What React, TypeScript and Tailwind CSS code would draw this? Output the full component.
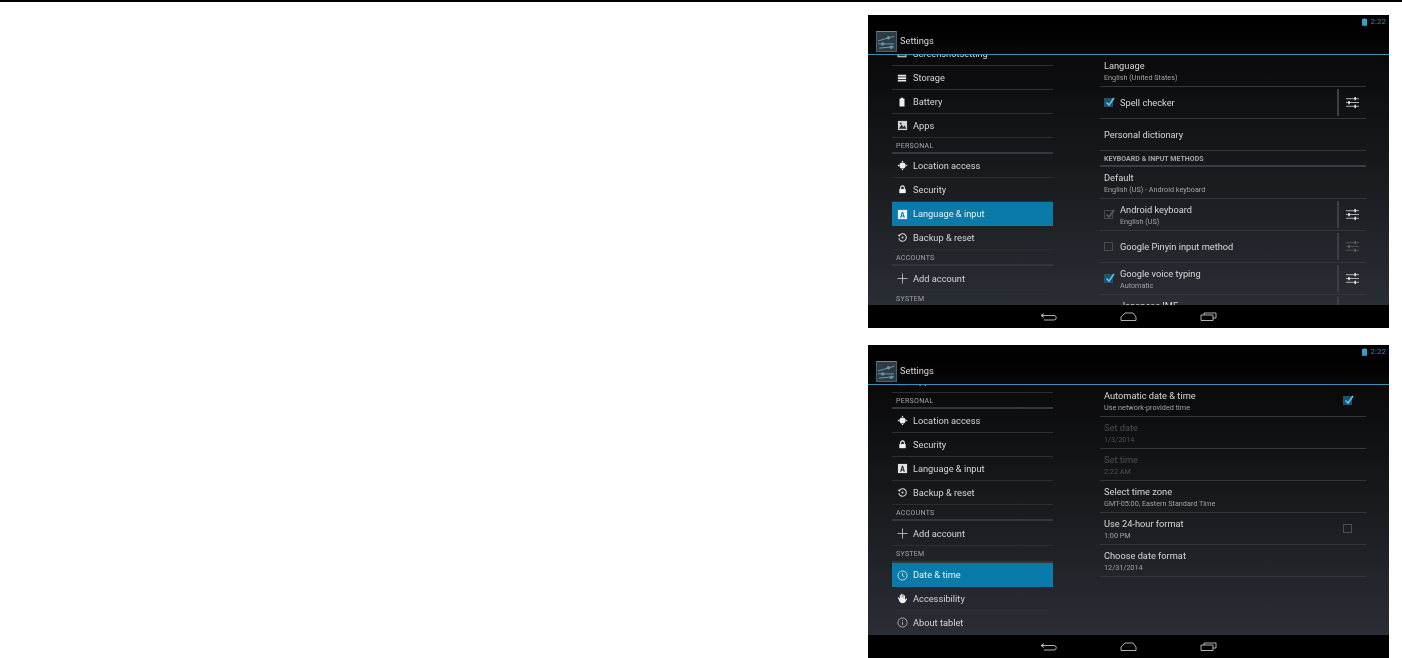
import type { ReactNode } from "react";

const Svg = ({ children, className = "h-[10px] w-[10px]" }: { children: ReactNode; className?: string }) => (
  <svg viewBox="0 0 12 12" className={`shrink-0 ${className}`} aria-hidden>
    {children}
  </svg>
);

// holo system icons, drawn small
const icons: Record<string, ReactNode> = {
  screen: (
    <Svg>
      <rect x="0.5" y="2" width="11" height="8" fill="#bdbdbd" />
      <rect x="2" y="3.5" width="8" height="5" fill="#3a3d40" />
    </Svg>
  ),
  storage: (
    <Svg>
      <path d="M1 2h10v2.2H1zM1 5h10v2.2H1zM1 8h10v2.2H1z" fill="#e8e8e8" />
    </Svg>
  ),
  battery: (
    <Svg>
      <path d="M4.5 1h3v1H9v9.5H3V2h1.5z" fill="#f0f0f0" />
    </Svg>
  ),
  apps: (
    <Svg className="h-[11px] w-[11px]">
      <rect x="1" y="1" width="10" height="10" fill="#d4d4d4" />
      <path d="M2 9.5 5 5l2 2.5L8.5 6 10 9.5z" fill="#2a2a2a" />
      <circle cx="4" cy="3.8" r="1" fill="#2a2a2a" />
    </Svg>
  ),
  location: (
    <Svg className="h-[11px] w-[11px]">
      <path d="M6 0.5 7 2.3h-2zM6 11.5 5 9.7h2zM0.5 6 2.3 5v2zM11.5 6 9.7 7V5z" fill="#e8e8e8" />
      <circle cx="6" cy="6" r="3.4" fill="#eeeeee" />
    </Svg>
  ),
  lock: (
    <Svg className="h-[11px] w-[11px]">
      <path d="M2.5 5.5h7V10h-7z" fill="#f2f2f2" />
      <path d="M4 5.5V4a2 2 0 0 1 4 0v1.5" fill="none" stroke="#f2f2f2" strokeWidth="1.2" />
    </Svg>
  ),
  language: (
    <Svg className="h-[11px] w-[11px]">
      <rect x="1" y="1" width="10" height="10" fill="#e4e4e4" />
      <path d="M3.4 9.5 5.4 3h1.2l2 6.5H7.3L7 8.3H5l-.3 1.2zM5.3 7.2h1.4L6 4.8z" fill="#1f2226" />
    </Svg>
  ),
  languageOn: (
    <Svg className="h-[11px] w-[11px]">
      <rect x="1" y="1" width="10" height="10" fill="#f0f6fa" />
      <path d="M3.4 9.5 5.4 3h1.2l2 6.5H7.3L7 8.3H5l-.3 1.2zM5.3 7.2h1.4L6 4.8z" fill="#0a7fae" />
    </Svg>
  ),
  backup: (
    <Svg className="h-[11px] w-[11px]">
      <path d="M2.4 4.2A4.1 4.1 0 1 1 2 6.5" fill="none" stroke="#dcdcdc" strokeWidth="1.1" />
      <path d="M0.6 3.4 3.6 2.6 3.2 5.4z" fill="#dcdcdc" />
      <circle cx="6" cy="6" r="1.1" fill="#dcdcdc" />
    </Svg>
  ),
  add: (
    <Svg className="h-[11px] w-[11px]">
      <path d="M6 0.5v11M0.5 6h11" stroke="#c8c8c8" strokeWidth="0.9" />
    </Svg>
  ),
  clock: (
    <Svg className="h-[11px] w-[11px]">
      <circle cx="6" cy="6" r="5" fill="none" stroke="#dbeaf2" strokeWidth="0.9" />
      <path d="M6 3v3.2l2 1.2" fill="none" stroke="#dbeaf2" strokeWidth="0.9" />
    </Svg>
  ),
  hand: (
    <Svg className="h-[11px] w-[11px]">
      <path
        d="M3 6V2.6a.6.6 0 0 1 1.2 0V5h.3V1.5a.6.6 0 0 1 1.2 0V5H6V1.9a.6.6 0 0 1 1.2 0V5.2h.3V3a.6.6 0 0 1 1.2 0v4.4c1-.8 1.7-1.5 2.2-1.2.4.3-.6 1.7-1.5 3-.7 1.1-1.6 1.9-3.2 1.9-2 0-3.4-1.2-3.9-3L1 5.4c-.2-.7.8-1 1.1-.3z"
        fill="#efefef"
      />
    </Svg>
  ),
  info: (
    <Svg className="h-[11px] w-[11px]">
      <circle cx="6" cy="6" r="5" fill="none" stroke="#c4c4c4" strokeWidth="0.9" />
      <path d="M6 5.2v3.6M6 3.2v1" stroke="#c4c4c4" strokeWidth="0.9" />
    </Svg>
  ),
};

type NavEntry =
  | { header: string; tall?: boolean }
  | { id: string; label: string; icon: string; tall?: boolean };

const sideNav: NavEntry[] = [
  { id: "screen", label: "Screenshotsetting", icon: "screen" },
  { id: "storage", label: "Storage", icon: "storage" },
  { id: "battery", label: "Battery", icon: "battery" },
  { id: "apps", label: "Apps", icon: "apps" },
  { header: "PERSONAL" },
  { id: "location", label: "Location access", icon: "location" },
  { id: "security", label: "Security", icon: "lock" },
  { id: "language", label: "Language & input", icon: "language" },
  { id: "backup", label: "Backup & reset", icon: "backup" },
  { header: "ACCOUNTS" },
  { id: "add", label: "Add account", icon: "add", tall: true },
  { header: "SYSTEM", tall: true },
  { id: "date", label: "Date & time", icon: "clock" },
  { id: "access", label: "Accessibility", icon: "hand" },
  { id: "about", label: "About tablet", icon: "info" },
];

function SettingsGlyph() {
  return (
    <div className="flex h-[21px] w-[21px] shrink-0 items-center justify-center rounded-[1px] border border-[#3d6478] border-t-[#4f93b3] bg-[#2f3b42]">
      <svg viewBox="0 0 20 20" className="h-[19px] w-[19px]" aria-hidden>
        <path d="M1 9.5 18 4.5M1 12.5h17M2 17l16-1.5" stroke="#8fb0bf" strokeWidth="0.8" fill="none" />
        <circle cx="12" cy="6" r="1.8" fill="#4f9cc4" />
        <circle cx="6" cy="12.5" r="1.8" fill="#4f9cc4" />
        <circle cx="15" cy="16" r="1.8" fill="#4f9cc4" />
      </svg>
    </div>
  );
}

function TuneIcon({ dim = false }: { dim?: boolean }) {
  return (
    <svg viewBox="0 0 12 12" className={dim ? "h-[13px] w-[13px] opacity-30" : "h-[13px] w-[13px]"} aria-hidden>
      <path d="M0 2.5h12M0 6h12M0 9.5h12" stroke="#c8c8c8" strokeWidth="0.8" />
      <path d="M8.5 1v3M2.8 4.5v3M8.5 8v3" stroke="#e8e8e8" strokeWidth="1.4" />
    </svg>
  );
}

function Check({ on = false, dim = false }: { on?: boolean; dim?: boolean }) {
  const box = dim ? "border-[#44484b]" : on ? "border-[#23526b] bg-[#1a5472]" : "border-[#4a4d50]";
  return (
    <span className={`relative block h-[9px] w-[9px] shrink-0 border ${box}`}>
      {on && (
        <svg viewBox="0 0 10 10" className="absolute -top-[2px] left-0 h-[10px] w-[10px]" aria-hidden>
          <path d="M1.5 5.5 4 8l5-7" fill="none" stroke={dim ? "#5a5e61" : "#5cc4ee"} strokeWidth="1.6" />
        </svg>
      )}
    </span>
  );
}

function SideList({ selected, offset }: { selected: string; offset: string }) {
  return (
    <div className="w-[185px] shrink-0 overflow-hidden pl-6">
      <div className={offset}>
        {sideNav.map((entry) => {
          if ("header" in entry) {
            return (
              <div
                key={entry.header}
                className={`flex items-center border-b-2 border-[#34373b] pl-1 pt-[2px] text-[7px] leading-none tracking-[0.3px] text-[#a3a5a7] ${entry.tall ? "h-[17px]" : "h-4"}`}
              >
                {entry.header}
              </div>
            );
          }
          const isOn = entry.id === selected;
          const icon = isOn && entry.id === "language" ? "languageOn" : entry.icon;
          return (
            <div
              key={entry.id}
              className={`box-border flex items-center pl-[5px] text-[9.25px] leading-none ${entry.tall ? "h-[25px] pt-[1px]" : "h-6"} ${isOn ? "bg-[#0a7ba8] text-[#e6f0f5]" : "border-b border-[#2b2e32] text-[#d6d6d6]"}`}
            >
              <span className="flex w-[10px] items-center justify-center">{icons[icon]}</span>
              <span className="ml-[6px]">{entry.label}</span>
            </div>
          );
        })}
      </div>
    </div>
  );
}

type Pref = {
  title: string;
  sub?: string;
  check?: "on" | "off" | "dim";
  tune?: "on" | "dim";
  end?: "on" | "off";
  muted?: boolean;
};

function PrefRow({ p }: { p: Pref }) {
  return (
    <div className="box-border flex h-8 shrink-0 items-center border-b border-[#33363a] pl-1">
      {p.check && (
        <span className="mr-[7px]">
          <Check on={p.check !== "off"} dim={p.check === "dim"} />
        </span>
      )}
      <div className="min-w-0 flex-1">
        <div className={`text-[9.25px] leading-[11px] ${p.muted ? "text-[#4c4f52]" : "text-[#d8d8d8]"}`}>{p.title}</div>
        {p.sub && <div className={`mt-[2px] text-[7.25px] leading-[9px] ${p.muted ? "text-[#4c4f52]" : "text-[#a0a2a4]"}`}>{p.sub}</div>}
      </div>
      {p.tune && (
        <div className="flex h-[27px] w-[29px] items-center justify-center border-l-2 border-[#3c3f43]">
          <TuneIcon dim={p.tune === "dim"} />
        </div>
      )}
      {p.end && (
        <span className="mr-[14px]">
          <Check on={p.end === "on"} />
        </span>
      )}
    </div>
  );
}

function Screen({ children }: { children: ReactNode }) {
  return (
    <div className="flex h-[313px] w-[521px] flex-col overflow-hidden bg-black blur-[0.3px]">
      <div className="box-content h-[39px] shrink-0 border-b border-[#3a8fb7] bg-gradient-to-b from-black to-[#0a0a0a]">
        <div className="flex h-[13px] items-center justify-end gap-[4px] pr-[3px] pt-[1px]">
          <svg viewBox="0 0 6 9" className="h-[8px] w-[5px]" aria-hidden>
            <path d="M2 0h2v1h2v8H0V1h2z" fill="#33a0cc" />
          </svg>
          <span className="text-[8px] leading-none text-[#2f88ad]">2:22</span>
        </div>
        <div className="flex h-[26px] items-center gap-[3px] pl-2">
          <SettingsGlyph />
          <span className="text-[9.25px] text-[#d8d8d8]">Settings</span>
        </div>
      </div>
      <div className="flex min-h-0 flex-1 overflow-hidden bg-gradient-to-b from-[#0a0a0b] to-[#2a2e35]">{children}</div>
      <div className="flex h-[23px] shrink-0 items-center justify-center bg-black">
        <div className="flex w-[80px] justify-center">
          <svg viewBox="0 0 17 9" className="h-[9px] w-[17px]" aria-hidden>
            <path d="M4 1.5 1 3.5 4 5.5M1 3.5h13a2 2 0 0 1 0 4.5H4" fill="none" stroke="#c4c4c4" strokeWidth="0.9" />
          </svg>
        </div>
        <div className="flex w-[80px] justify-center">
          <svg viewBox="0 0 17 9" className="h-[9px] w-[17px]" aria-hidden>
            <path d="M1 8.5V5L5 1h8l3 4v3.5z" fill="none" stroke="#c4c4c4" strokeWidth="0.9" />
          </svg>
        </div>
        <div className="flex w-[80px] justify-center">
          <svg viewBox="0 0 17 9" className="h-[9px] w-[17px]" aria-hidden>
            <path d="M1 3h12v5.5H1zM4 3V1h12v5h-3" fill="none" stroke="#c4c4c4" strokeWidth="0.9" />
          </svg>
        </div>
      </div>
    </div>
  );
}

const inputPrefs: Pref[] = [
  { title: "Language", sub: "English (United States)" },
  { title: "Spell checker", check: "on", tune: "on" },
  { title: "Personal dictionary" },
];

const keyboardPrefs: Pref[] = [
  { title: "Default", sub: "English (US) - Android keyboard" },
  { title: "Android keyboard", sub: "English (US)", check: "dim", tune: "on" },
  { title: "Google Pinyin input method", check: "off", tune: "dim" },
  { title: "Google voice typing", sub: "Automatic", check: "on", tune: "on" },
  { title: "Japanese IME", sub: "Japanese", check: "off", tune: "on" },
];

const datePrefs: Pref[] = [
  { title: "Automatic date & time", sub: "Use network-provided time", end: "on" },
  { title: "Set date", sub: "1/3/2014", muted: true },
  { title: "Set time", sub: "2:22 AM", muted: true },
  { title: "Select time zone", sub: "GMT-05:00, Eastern Standard Time" },
  { title: "Use 24-hour format", sub: "1:00 PM", end: "off" },
  { title: "Choose date format", sub: "12/31/2014" },
];

export default function App() {
  return (
    <div className="h-[658px] w-[1402px] overflow-hidden bg-white font-['Roboto',sans-serif]">
      <div className="h-[2px] bg-black" />
      <div className="ml-[868px] flex flex-col gap-[17px] pt-[13px]">
        <Screen>
          <SideList selected="language" offset="-mt-[13px]" />
          <div className="ml-[47px] w-[266px]">
            {inputPrefs.map((p) => (
              <PrefRow key={p.title} p={p} />
            ))}
            <div className="flex h-4 items-center border-b-2 border-[#3a3d41] pl-1 pt-[2px] text-[7px] font-bold leading-none tracking-[0.03px] text-[#a3a5a7]">
              KEYBOARD &amp; INPUT METHODS
            </div>
            {keyboardPrefs.map((p) => (
              <PrefRow key={p.title} p={p} />
            ))}
          </div>
        </Screen>
        <Screen>
          <SideList selected="date" offset="-mt-[88px]" />
          <div className="ml-[47px] w-[266px]">
            {datePrefs.map((p) => (
              <PrefRow key={p.title} p={p} />
            ))}
          </div>
        </Screen>
      </div>
    </div>
  );
}
